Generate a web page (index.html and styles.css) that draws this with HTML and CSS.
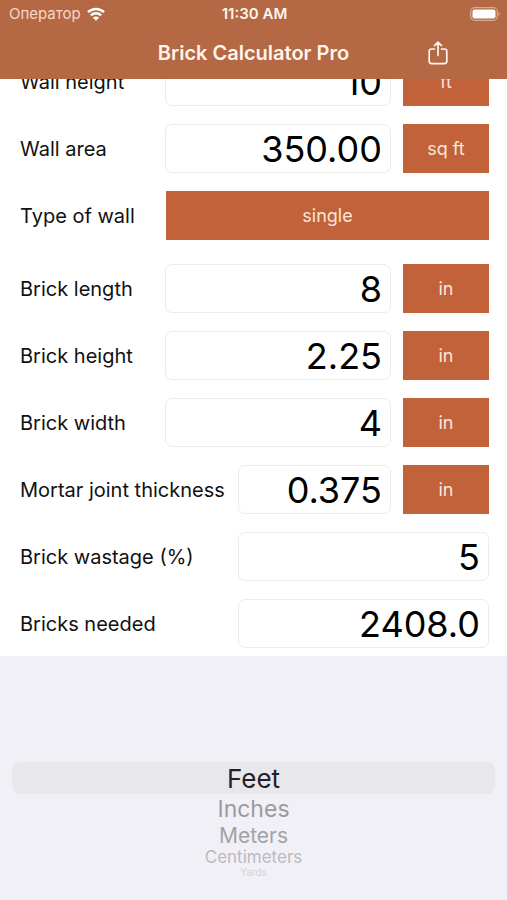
FILE: index.html
```html
<!DOCTYPE html>
<html lang="en">
<head>
<meta charset="utf-8">
<meta name="viewport" content="width=device-width, initial-scale=1">
<title>Brick Calculator Pro</title>
<link rel="stylesheet" href="styles.css">
</head>
<body>
<header class="top">
  <div class="status">
    <div class="carrier">
      <span lang="ru">Оператор</span>
      <svg class="wifi" viewBox="0 0 18 14" aria-hidden="true">
        <path d="M1 5.200a11.400 11.400 0 0 1 16 0M3.900 8.300a7.300 7.300 0 0 1 10.200 0" fill="none" stroke="currentColor" stroke-width="2.500"/>
        <path d="M9 13.800 5.900 10.700a4.400 4.400 0 0 1 6.200 0z" fill="currentColor"/>
      </svg>
    </div>
    <div class="time">11:30 AM</div>
    <svg class="battery" viewBox="0 0 30 14" aria-hidden="true">
      <rect x=".7" y=".7" width="26.6" height="12.6" rx="3.8" fill="none" stroke="currentColor" stroke-width="1.2" opacity=".45"/>
      <rect x="2.500" y="2.500" width="23" height="9" rx="2" fill="currentColor"/>
      <path d="M28.500 5v4c1.500-.7 1.500-3.300 0-4z" fill="currentColor" opacity=".5"/>
    </svg>
  </div>
  <div class="nav">
    <h1 class="title">Brick Calculator Pro</h1>
    <button class="share" type="button" aria-label="Share">
      <svg viewBox="0 0 20 24" aria-hidden="true" fill="none" stroke="currentColor" stroke-width="1.700" stroke-linecap="round" stroke-linejoin="round">
        <path d="M6.500 8H3.500a2.300 2.300 0 0 0-2.300 2.300v10A2.300 2.300 0 0 0 3.500 22.600h13a2.300 2.300 0 0 0 2.300-2.300v-10A2.300 2.300 0 0 0 16.500 8H13.500M10 14.500V1.300M6.500 4.600 10 1.200l3.500 3.400"/>
      </svg>
    </button>
  </div>
</header>

<main class="sheet">
  <form class="form">
    <div class="row">
      <label class="label" for="wall-height">Wall height</label>
      <input class="field" id="wall-height" value="10" inputmode="decimal">
      <button class="unit" type="button">ft</button>
    </div>
    <div class="row">
      <label class="label" for="wall-area">Wall area</label>
      <input class="field" id="wall-area" value="350.00" inputmode="decimal">
      <button class="unit" type="button">sq ft</button>
    </div>
    <div class="row row-last">
      <label class="label" for="wall-type">Type of wall</label>
      <button class="unit unit-wide" id="wall-type" type="button">single</button>
    </div>
    <div class="row">
      <label class="label" for="brick-length">Brick length</label>
      <input class="field" id="brick-length" value="8" inputmode="decimal">
      <button class="unit" type="button">in</button>
    </div>
    <div class="row">
      <label class="label" for="brick-height">Brick height</label>
      <input class="field" id="brick-height" value="2.25" inputmode="decimal">
      <button class="unit" type="button">in</button>
    </div>
    <div class="row">
      <label class="label" for="brick-width">Brick width</label>
      <input class="field" id="brick-width" value="4" inputmode="decimal">
      <button class="unit" type="button">in</button>
    </div>
    <div class="row">
      <label class="label label-long" for="joint">Mortar joint thickness</label>
      <input class="field" id="joint" value="0.375" inputmode="decimal">
      <button class="unit" type="button">in</button>
    </div>
    <div class="row">
      <label class="label label-long" for="wastage">Brick wastage (%)</label>
      <input class="field" id="wastage" value="5" inputmode="decimal">
    </div>
    <div class="row">
      <label class="label label-long" for="needed">Bricks needed</label>
      <input class="field" id="needed" value="2408.0" readonly>
    </div>
  </form>
</main>

<section class="picker" aria-label="Unit">
  <ul class="wheel">
    <li><button class="option option-selected" type="button" aria-pressed="true">Feet</button></li>
    <li><button class="option option-near" type="button">Inches</button></li>
    <li><button class="option option-mid" type="button">Meters</button></li>
    <li><button class="option option-far" type="button">Centimeters</button></li>
    <li><button class="option option-edge" type="button">Yards</button></li>
  </ul>
</section>
</body>
</html>
```
FILE: styles.css
```css
* {
  box-sizing: border-box;
}

body {
  margin: 0;
  min-height: 100vh;
  display: flex;
  flex-direction: column;
  background: #fff;
  color: #111;
  font-family: Inter, "Liberation Sans", sans-serif;
}

button,
input {
  font: inherit;
  color: inherit;
  margin: 0;
  border: 0;
}

button {
  padding: 0;
  background: none;
  cursor: pointer;
}

.top {
  position: sticky;
  top: 0;
  z-index: 1;
  height: 79px;
  background: #b46843;
  color: #fff5ec;
}

.status {
  display: grid;
  grid-template-columns: 1fr auto 1fr;
  align-items: center;
  height: 27px;
  padding: 0 7px 0 9px;
  font-size: 15px;
}

.carrier {
  display: flex;
  align-items: center;
  gap: 6px;
  color: #f6d9c8;
}

.wifi {
  width: 18px;
  height: 14px;
  color: #fff;
}

.time {
  font-weight: 600;
}

.battery {
  justify-self: end;
  width: 30px;
  height: 14px;
  color: #fff;
}

.nav {
  display: grid;
  grid-template-columns: 1fr auto 1fr;
  align-items: center;
  height: 51px;
}

.title {
  grid-column: 2;
  margin: 0;
  font-size: 20px;
  font-weight: 600;
}

.share {
  justify-self: end;
  width: 20px;
  height: 24px;
  margin-right: 59px;
}

.share svg {
  display: block;
  width: 20px;
  height: 24px;
}

/* The form is scrolled partly under the header. */
.sheet {
  margin-top: -22px;
  padding: 0 18px 8px 20px;
}

.form {
  display: flex;
  flex-direction: column;
  gap: 18px;
}

.row {
  display: flex;
  align-items: center;
  height: 49px;
}

.row-last {
  margin-bottom: 6px;
}

.label {
  flex: 0 0 145px;
  font-size: 20px;
  white-space: nowrap;
}

.label-long {
  flex-basis: 218px;
}

.field {
  flex: 1;
  min-width: 0;
  height: 49px;
  padding: 0 8px;
  border: 1px solid #ececec;
  border-radius: 7px;
  background: #fff;
  color: #000;
  font-size: 36px;
  text-align: right;
}

.unit {
  flex: 0 0 86px;
  height: 49px;
  margin-left: 12px;
  background: #c1623b;
  color: #fbe6d9;
  font-size: 18px;
}

.unit-wide {
  flex: 1;
  margin-left: 1px;
}

.picker {
  flex: 1;
  padding: 106px 12px 20px;
  background: #f1f0f6;
}

.wheel {
  margin: 0;
  padding: 0;
  list-style: none;
}

.option {
  display: block;
  width: 100%;
  border-radius: 8px;
}

.option-selected {
  height: 32px;
  background: #e8e7ec;
  color: #222226;
  font-size: 26px;
}

.option-near {
  height: 29px;
  color: #9b9a9f;
  font-size: 23px;
}

.option-mid {
  height: 25px;
  color: #a3a2a7;
  font-size: 21px;
  line-height: 25px;
}

.option-far {
  height: 19px;
  color: #bbbabf;
  font-size: 17px;
  line-height: 19px;
}

.option-edge {
  height: 11px;
  color: #d3d2d7;
  font-size: 10px;
  line-height: 11px;
}
```
